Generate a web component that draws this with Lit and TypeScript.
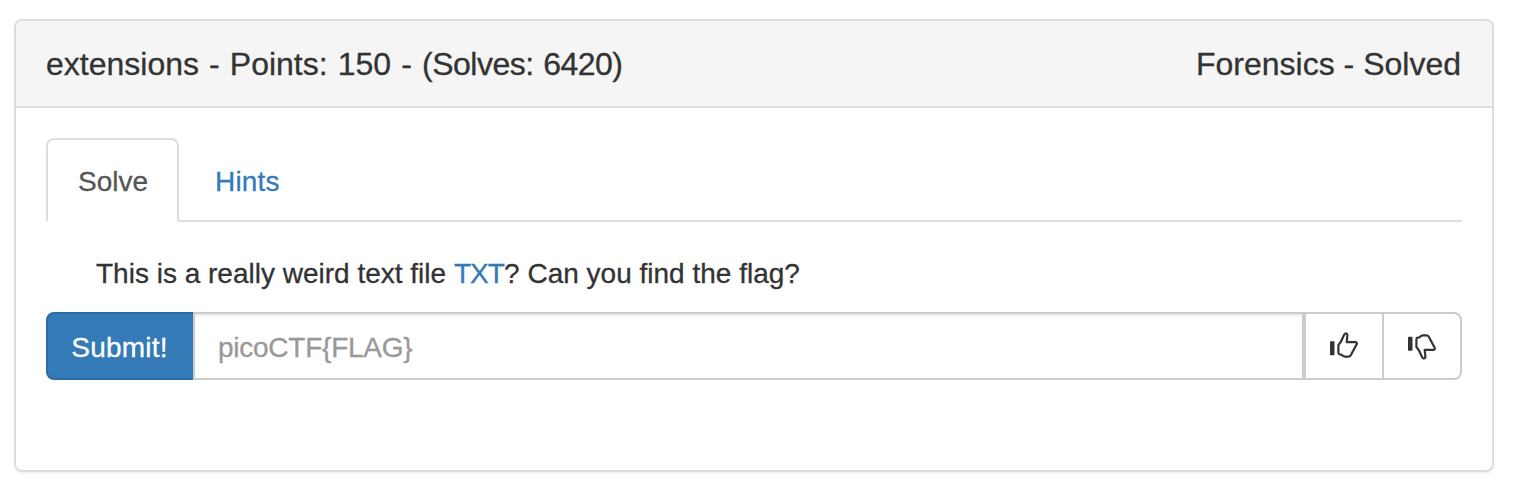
import { LitElement, html, css, svg } from "lit";
import { customElement } from "lit/decorators.js";

const hand = svg`
  <rect x="2" y="11.3" width="4.5" height="14" rx="0.8" fill="currentColor"></rect>
  <path d="M10.4 15.2 L13.3 11 L16.2 4.6 Q17.6 2.7 19 4 Q19.7 5.3 19.2 7.2 L18.7 12.2 L27.6 12.1 Q29.2 12.4 28.8 14 L23.2 24.6 Q22.4 26.5 20.4 26.6 L16.8 26.6 Q15.2 26.4 14.2 25.3 Q13.2 24.4 11.8 24.4 Q10.4 24.2 10.4 22.8 Z"
    fill="none" stroke="currentColor" stroke-width="2.2" stroke-linejoin="round"></path>`;

@customElement("app-root")
export class AppRoot extends LitElement {
  static styles = css`
    :host {
      display: block;
      box-sizing: border-box;
      height: 480px;
      padding: 19px 26px 8px 14px;
      overflow: hidden;
      background: #fff;
      color: #333;
      font: 28px/40px "Liberation Sans", Arial, sans-serif;
      -webkit-text-stroke: 0.3px currentColor;
    }
    * { box-sizing: border-box; }
    .panel {
      height: 453px;
      border: 2px solid #ddd;
      border-radius: 8px;
      box-shadow: 0 2px 2px rgba(0, 0, 0, 0.05);
    }
    .heading {
      display: flex;
      justify-content: space-between;
      height: 87px;
      padding: 25px 31px 0 30px;
      border-bottom: 2px solid #ddd;
      border-radius: 6px 6px 0 0;
      background: #f5f5f5;
      font-size: 32px;
      line-height: 36px;
      white-space: nowrap;
    }
    .title { word-spacing: 1.2px; }
    .solves { letter-spacing: -0.5px; }
    .body { padding: 30px 30px 0; }
    .tabs {
      display: flex;
      height: 84px;
      border-bottom: 2px solid #ddd;
    }
    .tab {
      height: 84px;
      padding: 22px 30px 0;
      border: 2px solid transparent;
      border-radius: 8px 8px 0 0;
      color: #337ab7;
      letter-spacing: 0.2px;
    }
    .tab.active {
      width: 133px;
      margin-right: 4px;
      border-color: #ddd;
      border-bottom-color: #fff;
      background: #fff;
      color: #555;
      letter-spacing: 0;
    }
    .prompt {
      height: 90px;
      margin: 0;
      padding: 32px 0 0 50px;
      white-space: nowrap;
    }
    .link { color: #337ab7; letter-spacing: -0.9px; }
    .group { display: flex; height: 68px; }
    .btn {
      display: flex;
      align-items: center;
      justify-content: center;
      margin: 0;
      padding: 0;
      border: 2px solid #ccc;
      background: #fff;
      color: #333;
      font: inherit;
    }
    .submit {
      width: 149px;
      padding: 3px 2px 0 0;
      border-color: #2e6da4;
      border-radius: 8px 0 0 8px;
      background: #337ab7;
      color: #fff;
      letter-spacing: 0.2px;
    }
    .field {
      flex: 1;
      min-width: 0;
      margin: 0 0 0 -2px;
      padding: 4px 24px 0 23px;
      border: 2px solid #ccc;
      border-radius: 0;
      background: #fff;
      box-shadow: inset 0 2px 2px rgba(0, 0, 0, 0.075);
      color: #555;
      font: inherit;
      letter-spacing: -0.25px;
      position: relative;
      outline: none;
    }
    .field::placeholder { color: #999; opacity: 1; }
    .vote { width: 80px; }
    .vote.last { margin-left: -2px; border-radius: 0 8px 8px 0; }
    .icon { display: block; width: 32px; height: 32px; }
    .icon.down { transform: scaleY(-1); }
  `;

  render() {
    return html`
      <section class="panel">
        <header class="heading">
          <span class="title">extensions - Points: 150 - <span class="solves">(Solves: 6420)</span></span>
          <span class="status">Forensics - Solved</span>
        </header>
        <div class="body">
          <nav class="tabs">
            <div class="tab active"><span>Solve</span></div>
            <div class="tab"><span>Hints</span></div>
          </nav>
          <p class="prompt">This is a really weird text file <a class="link">TXT</a>? Can you find the flag?</p>
          <div class="group">
            <button class="btn submit"><span>Submit!</span></button>
            <input class="field" placeholder="picoCTF{FLAG}" />
            <button class="btn vote" aria-label="Like">
              <svg class="icon" viewBox="0 0 32 32">${hand}</svg>
            </button>
            <button class="btn vote last" aria-label="Dislike">
              <svg class="icon down" viewBox="0 0 32 32">${hand}</svg>
            </button>
          </div>
        </div>
      </section>
    `;
  }
}
